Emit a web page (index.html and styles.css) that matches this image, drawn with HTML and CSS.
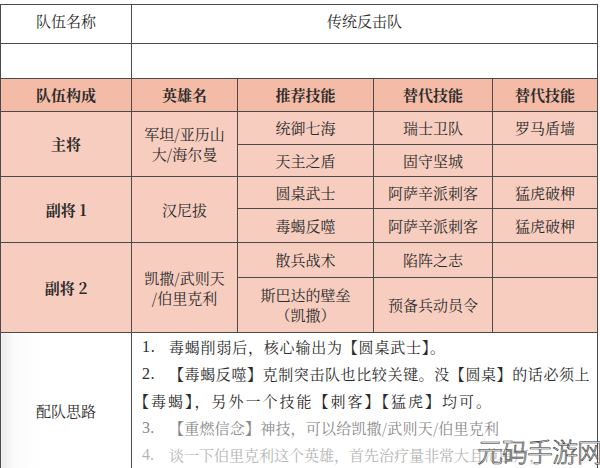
FILE: index.html
```html
<!DOCTYPE html>
<html lang="zh">
<head>
<meta charset="utf-8">
<link rel="stylesheet" href="styles.css">
</head>
<body>
<div class="page">
<table class="sheet">
  <colgroup>
    <col class="c1"><col class="c2"><col class="c3"><col class="c4"><col class="c5">
  </colgroup>
  <tr class="r-name">
    <td>队伍名称</td>
    <td colspan="4">传统反击队</td>
  </tr>
  <tr class="r-empty">
    <td></td>
    <td colspan="4"></td>
  </tr>
  <tr class="r-head">
    <th>队伍构成</th><th>英雄名</th><th>推荐技能</th><th>替代技能</th><th>替代技能</th>
  </tr>
  <tr class="pink r-a">
    <th rowspan="2">主将</th>
    <td rowspan="2" class="hero">军坦/亚历山<br>大/海尔曼</td>
    <td>统御七海</td><td>瑞士卫队</td><td>罗马盾墙</td>
  </tr>
  <tr class="pink r-b">
    <td>天主之盾</td><td>固守坚城</td><td></td>
  </tr>
  <tr class="pink r-c">
    <th rowspan="2">副将 1</th>
    <td rowspan="2">汉尼拔</td>
    <td>圆桌武士</td><td>阿萨辛派刺客</td><td>猛虎破柙</td>
  </tr>
  <tr class="pink r-d">
    <td>毒蝎反噬</td><td>阿萨辛派刺客</td><td>猛虎破柙</td>
  </tr>
  <tr class="pink r-e">
    <th rowspan="2">副将 2</th>
    <td rowspan="2" class="hero">凯撒/武则天<br>/伯里克利</td>
    <td>散兵战术</td><td>陷阵之志</td><td></td>
  </tr>
  <tr class="pink r-f">
    <td class="two">斯巴达的壁垒<br>（凯撒）</td><td>预备兵动员令</td><td></td>
  </tr>
  <tr class="r-notes">
    <td class="notes-label">配队思路</td>
    <td colspan="4" class="notes">
      <div class="line first"><span class="num">1.</span><span>毒蝎削弱后，核心输出为【圆桌武士】。</span></div>
      <div class="line wide"><span class="num">2.</span><span>【毒蝎反噬】克制突击队也比较关键。没【圆桌】的话必须上</span></div>
      <div class="line cont">【毒蝎】，另外一个技能【刺客】【猛虎】均可。</div>
      <div class="line fade1"><span class="num">3.</span><span>【重燃信念】神技，可以给凯撒/武则天/伯里克利</span></div>
      <div class="line fade2"><span class="num">4.</span><span>谈一下伯里克利这个英雄，首先治疗量非常大且范围广，</span></div>
    </td>
  </tr>
</table>
<div class="watermark">元码手游网</div>
</div>
</body>
</html>
```

FILE: styles.css
```css
html, body {
  margin: 0;
  padding: 0;
  background: #ffffff;
}
body {
  width: 600px;
  height: 468px;
  overflow: hidden;
}
.page {
  position: relative;
  width: 600px;
  height: 468px;
  overflow: hidden;
  padding-top: 4px;
  box-sizing: border-box;
}
.sheet {
  border-collapse: collapse;
  table-layout: fixed;
  width: 597px;
  font-family: "Noto Serif CJK SC", "Liberation Serif", "Noto Sans CJK SC", serif;
  font-size: 15px;
  color: #2b2b2b;
}
.c1 { width: 131px; }
.c2 { width: 106px; }
.c3 { width: 136px; }
.c4 { width: 119px; }
.c5 { width: 105px; }
.sheet td, .sheet th {
  border: 1px solid #4a4a4a;
  padding: 0;
  text-align: center;
  vertical-align: middle;
  line-height: 20px;
  font-weight: normal;
  white-space: nowrap;
  overflow: hidden;
}
.sheet th {
  font-weight: bold;
}
.r-name { height: 39px; }
.r-name td { vertical-align: middle; padding-bottom: 6px; }
.r-empty { height: 35px; }
.r-head { height: 33px; background: #f4bba7; }
.pink { background: #f6cdbf; }
.r-a { height: 33px; }
.r-b { height: 32px; }
.r-c { height: 32px; }
.r-d { height: 34px; }
.r-e { height: 35px; }
.r-f { height: 55px; }
.hero { line-height: 34px; }
.two { line-height: 26px; }
.r-notes { height: 156px; }
.notes-label {
  background: linear-gradient(90deg, #ececec 0px, #fafafa 12px, #ffffff 40px);
}
.notes {
  text-align: left !important;
  vertical-align: top !important;
  padding: 0 0 21px 2px !important;
}
.line {
  display: flex;
  line-height: 27px;
  height: 27px;
  white-space: nowrap;
}
.num {
  width: 27px;
  margin-left: 8px;
  flex: none;
  font-family: "Liberation Serif", serif;
  font-size: 16px;
}
.first { letter-spacing: 0.8px; }
.wide { letter-spacing: 0.6px; }
.cont { letter-spacing: 2px; }
.fade1 { color: #8a8a8a; letter-spacing: 0.2px; }
.fade2 { color: #b5b5b5; }
.watermark {
  position: absolute;
  right: -2px;
  bottom: 2px;
  font-family: "Noto Sans CJK SC", sans-serif;
  font-weight: 200;
  font-size: 26px;
  letter-spacing: -1px;
  color: #ffffff;
  -webkit-text-stroke: 0.6px #2a2a2a;
  line-height: 30px;
}
```
